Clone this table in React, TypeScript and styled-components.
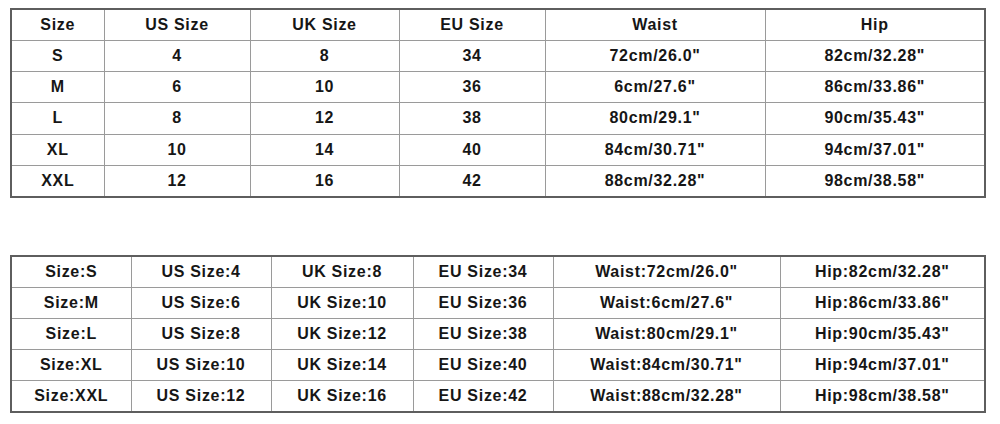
import React from 'react';
import styled, { createGlobalStyle } from 'styled-components';

const GlobalStyle = createGlobalStyle`
  html, body {
    margin: 0;
    padding: 0;
    background: #fff;
  }
  body {
    font-family: "Liberation Sans", Arial, sans-serif;
  }
`;

const Page = styled.div`
  width: 1000px;
  height: 424px;
  box-sizing: border-box;
  padding: 8px 0 0 10px;
  display: flex;
  flex-direction: column;
  gap: 57px;
`;

const Table = styled.table<{ $height: number }>`
  width: 974px;
  height: ${(p) => p.$height}px;
  border-collapse: collapse;
  table-layout: fixed;
  border: 2px solid #5e5e5e;
`;

const Cell = styled.td`
  border: 1px solid #9a9a9a;
  padding: 0;
  text-align: center;
  vertical-align: middle;
  font-size: 16px;
  font-weight: bold;
  letter-spacing: 0.7px;
  color: #161616;
  white-space: nowrap;
`;

const topCols = [93, 146, 149, 146, 220, 220];
const bottomCols = [120, 140, 142, 140, 227, 205];

const topRows = [
  ['Size', 'US Size', 'UK Size', 'EU Size', 'Waist', 'Hip'],
  ['S', '4', '8', '34', '72cm/26.0"', '82cm/32.28"'],
  ['M', '6', '10', '36', '6cm/27.6"', '86cm/33.86"'],
  ['L', '8', '12', '38', '80cm/29.1"', '90cm/35.43"'],
  ['XL', '10', '14', '40', '84cm/30.71"', '94cm/37.01"'],
  ['XXL', '12', '16', '42', '88cm/32.28"', '98cm/38.58"'],
];

const prefixes = ['Size:', 'US Size:', 'UK Size:', 'EU Size:', 'Waist:', 'Hip:'];
const bottomRows = topRows.slice(1).map((row) => row.map((v, i) => prefixes[i] + v));

const SizeTable: React.FC<{ rows: string[][]; cols: number[]; height: number }> = ({ rows, cols, height }) => (
  <Table $height={height}>
    <colgroup>
      {cols.map((w, i) => (
        <col key={i} style={{ width: w }} />
      ))}
    </colgroup>
    <tbody>
      {rows.map((row, r) => (
        <tr key={r}>
          {row.map((v, c) => (
            <Cell key={c}>{v}</Cell>
          ))}
        </tr>
      ))}
    </tbody>
  </Table>
);

const App: React.FC = () => (
  <>
    <GlobalStyle />
    <Page>
      <SizeTable rows={topRows} cols={topCols} height={190} />
      <SizeTable rows={bottomRows} cols={bottomCols} height={158} />
    </Page>
  </>
);

export default App;
